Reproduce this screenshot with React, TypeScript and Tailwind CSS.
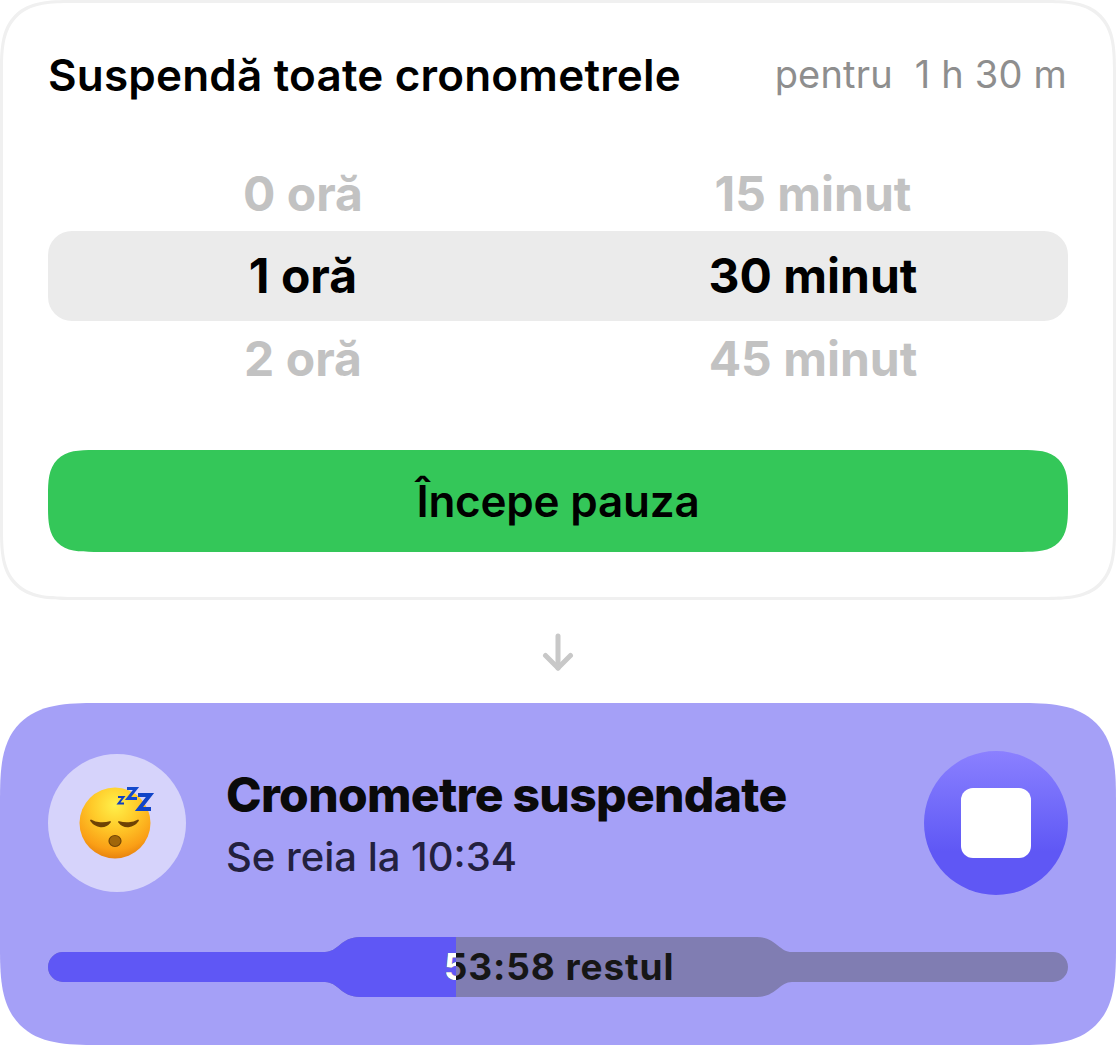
const BAR_SHAPE =
  "M15 15H277C290 15 293 0 312 0H709C728 0 731 15 744 15H1005A15 15 0 0 1 1005 45H744C731 45 728 60 709 60H312C293 60 290 45 277 45H15A15 15 0 0 1 15 15Z";

const SleepingFace = () => (
  <svg width="76" height="76" viewBox="0 0 76 76" fill="none">
    <defs>
      <radialGradient id="face" cx="0.5" cy="0.25" r="0.8">
        <stop offset="0" stopColor="#fff04a" />
        <stop offset="0.4" stopColor="#ffcb2a" />
        <stop offset="0.78" stopColor="#fa9f16" />
        <stop offset="1" stopColor="#e0780c" />
      </radialGradient>
    </defs>
    <circle cx="36" cy="38" r="35.5" fill="url(#face)" />
    <path d="M12 35.500C17 42.500 26 43.500 31 37C25 39 17 38.500 12 35.500Z" fill="#6e4205" stroke="#6e4205" strokeWidth="1.8" strokeLinejoin="round" />
    <path d="M40 37C45 43.500 54 42.500 59 35.500C54 38.500 46 39 40 37Z" fill="#6e4205" stroke="#6e4205" strokeWidth="1.8" strokeLinejoin="round" />
    <ellipse cx="36" cy="56" rx="6" ry="5.500" fill="#a0660a" stroke="#734606" strokeWidth="1.2" />
    <path d="M39 12H44.500L39.500 18.500H45" stroke="#0f3fc0" strokeWidth="2" />
    <path d="M48 3.500H57L49 13.500H58" stroke="#1449cc" strokeWidth="3" />
    <path d="M59 10H71L60 24H72" stroke="#1145c8" strokeWidth="4" />
  </svg>
);

const ProgressBar = () => (
  <div className="relative w-full h-[60px]">
    <svg width="1020" height="60" viewBox="0 0 1020 60" className="block">
      <defs>
        <clipPath id="done">
          <rect x="0" y="0" width="408" height="60" />
        </clipPath>
      </defs>
      <path d={BAR_SHAPE} fill="#807db2" />
      <path d={BAR_SHAPE} fill="#5f57f5" clipPath="url(#done)" />
    </svg>
    <div className="absolute inset-0 pl-[2px] flex items-center justify-center text-[37px] tracking-[0.9px] font-bold text-[#161616]">
      53:58 restul
    </div>
    <div className="absolute inset-y-0 left-0 w-[408px] overflow-hidden">
      <div className="w-[1020px] h-full pl-[2px] flex items-center justify-center text-[37px] tracking-[0.9px] font-bold text-white">
        53:58 restul
      </div>
    </div>
  </div>
);

const App = () => {
  return (
    <div className="w-[1116px] h-[1045px] bg-white font-['Inter',sans-serif] flex flex-col">
      {/* Timer picker card */}
      <section className="h-[600px] border-[3px] border-[#f0f0f0] rounded-[72px] [corner-shape:superellipse(1.6)] px-[45px] flex flex-col">
        <div className="h-[145px] pb-[2px] flex items-center justify-between">
          <h1 className="text-[44px] tracking-[0.2px] font-semibold text-black whitespace-nowrap">Suspendă toate cronometrele</h1>
          <span className="text-[38px] tracking-[0.2px] pr-[1px] text-[#8e8e8e] whitespace-pre">pentru  1 h 30 m</span>
        </div>
        <div className="grid grid-cols-2 h-[83px] pt-2 items-center text-center text-[48px] font-bold text-[#c2c2c2]">
          <span>0 oră</span>
          <span>15 minut</span>
        </div>
        <div className="grid grid-cols-2 h-[90px] items-center text-center text-[48px] font-bold text-black bg-[#ebebeb] rounded-[24px]">
          <span>1 oră</span>
          <span>30 minut</span>
        </div>
        <div className="grid grid-cols-2 h-[76px] items-center text-center text-[48px] font-bold text-[#c2c2c2]">
          <span>2 oră</span>
          <span>45 minut</span>
        </div>
        <button className="mt-[53px] h-[102px] bg-[#34c759] rounded-[46px] [corner-shape:superellipse(1.6)] text-[44px] tracking-[-0.2px] font-semibold text-black">
          Începe pauza
        </button>
      </section>

      {/* Arrow */}
      <div className="h-[103px] flex items-center justify-center">
        <svg width="32" height="40" viewBox="0 0 32 40" fill="none" stroke="#c8c8c8" strokeWidth="5" strokeLinecap="round" strokeLinejoin="round">
          <path d="M16 4V36" />
          <path d="M3.500 23.500L16 36L28.500 23.500" />
        </svg>
      </div>

      {/* Live activity card */}
      <section className="h-[342px] bg-[#a5a0f7] rounded-[98px] [corner-shape:superellipse(1.6)] px-12 pt-12 flex flex-col gap-[42px]">
        <div className="flex items-center h-[144px]">
          <div className="w-[138px] h-[138px] rounded-full bg-[#d6d3fb] flex items-center justify-center shrink-0">
            <SleepingFace />
          </div>
          <div className="ml-10 pt-2 flex-1 flex flex-col">
            <div className="text-[48px] leading-[60px] font-extrabold text-[#0a0a0a] tracking-[-0.7px]">Cronometre suspendate</div>
            <div className="text-[40px] leading-[64px] font-medium text-[#23213f]">Se reia la 10:34</div>
          </div>
          <button className="w-36 h-36 rounded-full bg-gradient-to-b from-[#8b80ff] to-[#5f57f5] to-70% flex items-center justify-center shrink-0">
            <span className="block w-[70px] h-[70px] bg-white rounded-xl" />
          </button>
        </div>
        <ProgressBar />
      </section>
    </div>
  );
};

export default App;
